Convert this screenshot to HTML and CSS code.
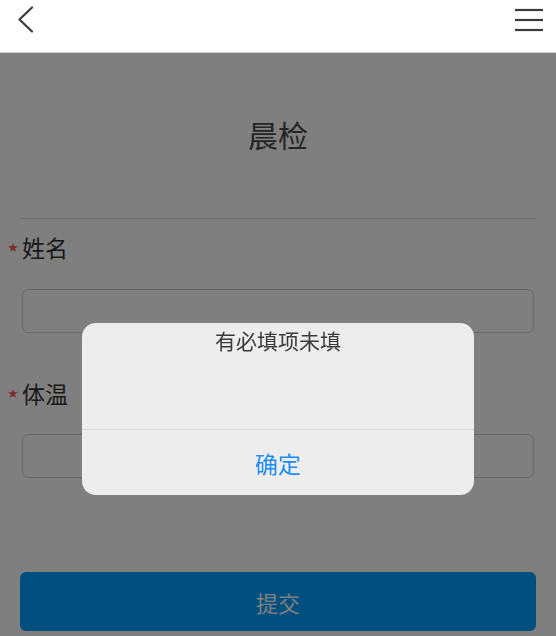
FILE: index.html
```html
<!DOCTYPE html>
<html lang="zh">
<head>
<meta charset="utf-8">
<title>晨检</title>
<link rel="stylesheet" href="styles.css">
</head>
<body>
<header class="topbar">
  <svg class="back" width="18" height="28" viewBox="0 0 18 28"><polyline points="15,1.5 2.5,13.5 15,25.5" fill="none" stroke="#3a3a3a" stroke-width="2.2" stroke-linecap="round" stroke-linejoin="round"/></svg>
  <svg class="menu" width="30" height="24" viewBox="0 0 30 24"><g stroke="#3a3a3a" stroke-width="2.2"><line x1="1" y1="2" x2="29" y2="2"/><line x1="1" y1="12" x2="29" y2="12"/><line x1="1" y1="22" x2="29" y2="22"/></g></svg>
</header>
<main class="page">
  <h1 class="title">晨检</h1>
  <div class="divider"></div>
  <div class="field">
    <label class="label"><span class="star">★</span>姓名</label>
    <div class="input"></div>
  </div>
  <div class="field">
    <label class="label"><span class="star">★</span>体温</label>
    <div class="input"></div>
  </div>
  <button class="submit">提交</button>
</main>
<div class="mask">
  <div class="dialog">
    <div class="dialog-msg">有必填项未填</div>
    <div class="dialog-btn">确定</div>
  </div>
</div>
</body>
</html>
```

FILE: styles.css
```css
* { box-sizing: border-box; }
html, body { margin: 0; padding: 0; background: #fff; }
body {
  font-family: "Noto Sans CJK SC", "Noto Sans", sans-serif;
  color: #333;
  width: 556px;
  height: 636px;
  overflow: hidden;
}
.topbar {
  height: 53px;
  border-bottom: 1px solid #d2d2d2;
  background: #fff;
  display: flex;
  justify-content: space-between;
  align-items: flex-start;
  padding: 6px 12px 0 17px;
}
.menu { margin-top: 2px; }
.page {
  padding: 0 20px;
}
.title {
  margin: 61px 0 0;
  font-size: 30px;
  font-weight: 400;
  line-height: 40px;
  text-align: center;
  color: #4a4a4a;
}
.divider {
  margin-top: 64px;
  height: 1px;
  background: #e4e4e4;
}
.field {
  padding: 0 2px;
}
.label {
  display: block;
  position: relative;
  font-size: 23px;
  line-height: 30px;
  margin-top: 13px;
  color: #333;
}
.field + .field .label { margin-top: 45px; }
.star {
  position: absolute;
  left: -14px;
  top: 0;
  font-size: 10px;
  line-height: 30px;
  color: #f05a50;
}
.input {
  margin-top: 27px;
  height: 44px;
  border: 1px solid #cfcfcf;
  border-radius: 6px;
  background: #fff;
}
.field + .field .input { margin-top: 26px; }
.submit {
  display: block;
  width: 100%;
  margin-top: 94px;
  height: 59px;
  border: none;
  border-radius: 6px;
  background: #009fff;
  color: #fff;
  font-family: inherit;
  font-size: 22px;
}
.mask {
  position: fixed;
  top: 53px;
  left: 0;
  right: 0;
  bottom: 0;
  background: rgba(0, 0, 0, 0.5);
  display: flex;
  justify-content: center;
  align-items: flex-start;
  padding-top: 270px;
}
.dialog {
  width: 392px;
  height: 172px;
  background: #ededed;
  border-radius: 14px;
  display: flex;
  flex-direction: column;
  overflow: hidden;
}
.dialog-msg {
  height: 107px;
  text-align: center;
  font-size: 21px;
  line-height: 34px;
  color: #3a3a3a;
  border-bottom: 1px solid #dcdcdc;
}
.dialog-btn {
  flex: 1;
  display: flex;
  align-items: center;
  justify-content: center;
  font-size: 23px;
  color: #1b8cfb;
}
```
